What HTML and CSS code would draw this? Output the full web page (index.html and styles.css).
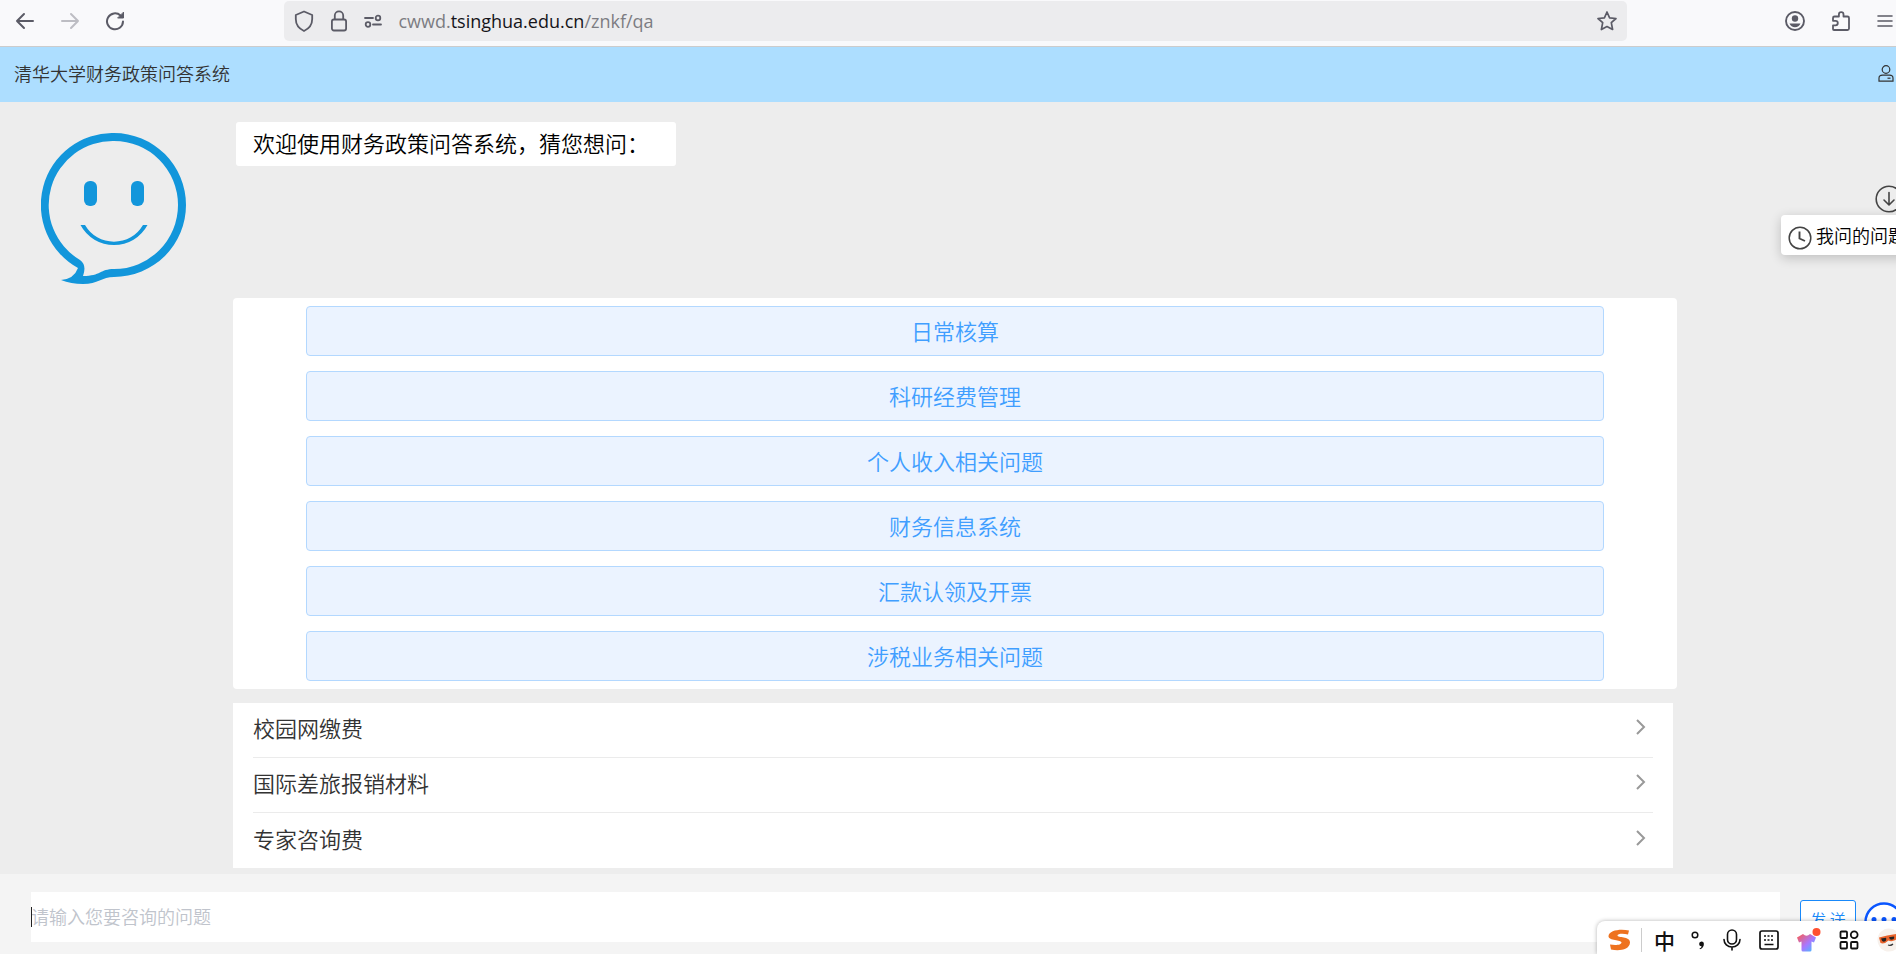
FILE: index.html
```html
<!DOCTYPE html>
<html lang="zh-CN">
<head>
<meta charset="utf-8">
<title>清华大学财务政策问答系统</title>
<link rel="stylesheet" href="styles.css">
</head>
<body>
<div class="browser">
  <div class="nav">
    <button class="icon-btn" aria-label="后退"><svg width="20" height="20" viewBox="0 0 20 20" fill="none" stroke="#5b5b66" stroke-width="2" stroke-linecap="round" stroke-linejoin="round"><path d="M18 10H2M9 3L2 10l7 7"/></svg></button>
    <button class="icon-btn" aria-label="前进"><svg width="20" height="20" viewBox="0 0 20 20" fill="none" stroke="#bdbdc3" stroke-width="2" stroke-linecap="round" stroke-linejoin="round"><path d="M2 10h16M11 3l7 7-7 7"/></svg></button>
    <button class="icon-btn" aria-label="刷新"><svg width="20" height="20" viewBox="0 0 20 20" fill="none" stroke="#5b5b66" stroke-width="2" stroke-linecap="round"><path d="M18 10.500A8 8 0 1 1 15.500 4.500"/><path d="M18.500 1.500V7h-5.500z" fill="#5b5b66" stroke-width="1" stroke-linejoin="round"/></svg></button>
  </div>
  <div class="address">
    <svg width="20" height="22" viewBox="0 0 20 22" fill="none" stroke="#5b5b66" stroke-width="1.800" stroke-linejoin="round"><path d="M10 1.500L1.800 5v4c0 5 3 9.500 8.200 12 5.200-2.500 8.200-7 8.200-12V5z"/></svg>
    <svg width="18" height="22" viewBox="0 0 18 22" fill="none" stroke="#5b5b66" stroke-width="1.800"><rect x="1.900" y="9.500" width="14.200" height="11" rx="2"/><path d="M4.800 9.500V5.500a4.200 4.200 0 0 1 8.400 0v4"/></svg>
    <svg width="18" height="14" viewBox="0 0 18 14" fill="none" stroke="#5b5b66" stroke-width="1.800" stroke-linecap="round"><path d="M1 4h8M9 10.500h8"/><circle cx="14" cy="4" r="2.300"/><circle cx="4" cy="10.500" r="2.300"/></svg>
    <span class="url">cwwd.<b>tsinghua.edu.cn</b>/znkf/qa</span>
    <button class="icon-btn" aria-label="收藏"><svg width="20" height="20" viewBox="0 0 20 20" fill="none" stroke="#5b5b66" stroke-width="1.700" stroke-linejoin="round"><path d="M10 1l2.600 5.800 6.400.700-4.700 4.200 1.300 6.800L10 15.500l-5.600 3 1.300-6.800L1 7.500l6.400-.7z"/></svg></button>
  </div>
  <div class="tools">
    <button class="icon-btn" aria-label="账户"><svg width="20" height="20" viewBox="0 0 20 20"><circle cx="10" cy="10" r="9" fill="none" stroke="#5b5b66" stroke-width="1.900"/><circle cx="10" cy="7.500" r="3.200" fill="#5b5b66"/><path d="M4.500 12.500h11c-.8 2.300-3 3.800-5.500 3.800s-4.700-1.500-5.500-3.800z" fill="#5b5b66"/></svg></button>
    <button class="icon-btn" aria-label="扩展"><svg width="18" height="20" viewBox="0 0 18 20" fill="none" stroke="#5b5b66" stroke-width="1.800" stroke-linejoin="round"><path d="M2 19h13.500a1.500 1.500 0 0 0 1.500-1.500V7a1.500 1.500 0 0 0-1.500-1.500H11.500V3.500a2.300 2.300 0 0 0-4.600 0v2H2.500A1.500 1.500 0 0 0 1 7v2.800h2.500a2.300 2.300 0 0 1 0 4.600H1V18a1 1 0 0 0 1 1z"/></svg></button>
    <button class="icon-btn" aria-label="菜单"><svg width="16" height="12" viewBox="0 0 16 12" stroke="#5b5b66" stroke-width="1.600" stroke-linecap="round"><path d="M1 1h14M1 6h14M1 11h14"/></svg></button>
  </div>
</div>

<header class="header">
  <h1 class="title">清华大学财务政策问答系统</h1>
  <button class="icon-btn" aria-label="用户"><svg width="16" height="17" viewBox="0 0 16 17" fill="none" stroke="#333" stroke-width="1.200"><circle cx="8" cy="4.500" r="3.800"/><path d="M1 16.200v-3c0-2 1.500-3 3.500-3h7c2 0 3.500 1 3.500 3v3z"/><path d="M9.500 13.200h3"/></svg></button>
</header>

<main class="main">
  <section class="intro">
    <svg class="face" viewBox="0 0 146 152" fill="#1296db"><path fill-rule="evenodd" d="M73 0A72 72 0 0 1 73 144C61 144 57 151 42 151Q30 151 20 147Q33 146 37 135A72 72 0 0 1 73 0ZM73 8A64 64 0 0 0 39 127Q46 132 42 143C60 143 59 136 73 136A64 64 0 0 0 73 8Z"/><rect x="43" y="48" width="13" height="25" rx="6"/><rect x="90" y="48" width="13" height="25" rx="6"/><path d="M39.500 92A38 38 0 0 0 106.500 92H102A33.500 33.500 0 0 1 44 92Z"/></svg>
    <p class="welcome">欢迎使用财务政策问答系统，猜您想问：</p>
  </section>

  <section class="topics">
    <button class="topic">日常核算</button>
    <button class="topic">科研经费管理</button>
    <button class="topic">个人收入相关问题</button>
    <button class="topic">财务信息系统</button>
    <button class="topic">汇款认领及开票</button>
    <button class="topic">涉税业务相关问题</button>
  </section>

  <nav class="list">
    <a class="row" href="#">校园网缴费<svg class="chev" viewBox="0 0 10 16"><path d="M1 1l7 7-7 7"/></svg></a>
    <a class="row" href="#">国际差旅报销材料<svg class="chev" viewBox="0 0 10 16"><path d="M1 1l7 7-7 7"/></svg></a>
    <a class="row" href="#">专家咨询费<svg class="chev" viewBox="0 0 10 16"><path d="M1 1l7 7-7 7"/></svg></a>
  </nav>
</main>

<form class="ask">
  <input class="question" type="text" aria-label="咨询问题" placeholder="请输入您要咨询的问题">
  <span class="caret"></span>
  <button class="send" type="button">发 送</button>
  <svg class="chat" width="40" height="40" viewBox="0 0 40 40"><circle cx="20" cy="20" r="18.500" fill="#fff" stroke="#0a56ff" stroke-width="2.500"/><g fill="#0a56ff"><circle cx="10" cy="17.500" r="2.500"/><circle cx="20" cy="17.500" r="2.500"/><circle cx="30" cy="17.500" r="2.500"/></g></svg>
</form>

<aside class="side">
  <button class="icon-btn down" aria-label="收起"><svg width="28" height="28" viewBox="0 0 28 28" fill="none" stroke="#444" stroke-width="1.600" stroke-linecap="round" stroke-linejoin="round"><circle cx="14" cy="14" r="12.800"/><path d="M14 7.500v12M9 15l5 5 5-5"/></svg></button>
  <button class="mine"><svg class="clock" width="24" height="24" viewBox="0 0 24 24" fill="none" stroke="#444" stroke-width="1.500"><circle cx="12" cy="12" r="10.800"/><path d="M11.500 5.500V12.500l5.500 2.500" stroke-width="1.900"/></svg>我问的问题</button>
</aside>

<div class="ime">
  <svg width="24" height="22" viewBox="0 0 24 22" fill="#ee721f"><path d="M22 1.500C14-.5 2 1 1.500 7c-.3 5 13 3.500 13 6.500 0 2.500-6 3-11.500 2L4 20.500c8 1.800 18.500.500 19-7 .3-6.500-12.500-4.500-12.500-7 0-2 6-2 10.500-1z"/></svg>
  <i class="sep"></i>
  <span class="zh">中</span>
  <svg width="14" height="20" viewBox="0 0 14 20"><circle cx="4" cy="5" r="2.800" fill="none" stroke="#111" stroke-width="1.500"/><path d="M8.500 18.500c1.500-.5 2-1.300 2-2.200a2.400 2.400 0 1 1 2.400-2.500c0 2.800-1.500 4.800-3.900 5.500z" fill="#111"/></svg>
  <svg width="18" height="22" viewBox="0 0 18 22" fill="none" stroke="#111" stroke-width="1.600" stroke-linecap="round"><rect x="4.500" y="1" width="9" height="14" rx="4.500"/><path d="M1 10.500a8 7.500 0 0 0 16 0M9 18v3"/></svg>
  <svg width="20" height="20" viewBox="0 0 20 20" fill="none" stroke="#111" stroke-width="1.700"><rect x="1" y="1" width="18" height="18" rx="2"/><path d="M5 6h2m1.500 0h2m1.500 0h2M5 10h2m1.500 0h2m1.500 0h2M5.500 14.500h9"/></svg>
  <svg width="24" height="24" viewBox="0 0 24 24"><defs><linearGradient id="g" x1="0" y1="0" x2="1" y2="1"><stop stop-color="#ff5a4a"/><stop offset=".55" stop-color="#a878ff"/><stop offset="1" stop-color="#36c8ff"/></linearGradient></defs><path fill="url(#g)" d="M0 9.500L6 6q3.500 3.500 7 0L19 9.500l-2 5-2.500-1V22q0 1.500-1.500 1.500H6Q4.500 23.500 4.500 22V13.500l-2.500 1z"/><circle cx="19.500" cy="4" r="4" fill="#ff5030"/></svg>
  <svg width="20" height="20" viewBox="0 0 20 20" fill="none" stroke="#111" stroke-width="1.800"><rect x="1.500" y="1.500" width="6.500" height="6.500" rx="1"/><circle cx="15.200" cy="4.800" r="3.400"/><rect x="1.500" y="12" width="6.500" height="6.500" rx="1"/><rect x="12" y="12" width="6.500" height="6.500" rx="1"/></svg>
  <svg width="25" height="24" viewBox="0 0 25 24"><circle cx="12" cy="12" r="11.500" fill="#f7f1ec"/><path d="M2 9.500q8-2.500 17-3.500 1.500 3-.5 6-4 2-7 .5-4 4-8 2.500z" fill="#e8622a"/><path d="M4 10.500l5-.8q1 3-1.500 3.800T4 10.500zM12 9.200l5-.8q.8 2.600-1.700 3.200T12 9.200z" fill="#222"/><path d="M11 17q3 1 5-1" fill="none" stroke="#333" stroke-width="1.200"/><path d="M23.500 5l1.500 3v6l-1.500 1-1-3.500-2.500-1 2.500-1.500z" fill="#ffd02e"/></svg>
</div>
</body>
</html>
```
FILE: styles.css
```css
* { box-sizing: border-box; }
body {
  margin: 0;
  height: 100vh;
  display: flex;
  flex-direction: column;
  position: relative;
  overflow: hidden;
  background: #ededed;
  color: #333;
  font: 350 18px/24px "Noto Sans CJK SC", sans-serif;
}
svg { display: block; flex: none; }
button { font: inherit; color: inherit; cursor: pointer; }
.icon-btn { display: flex; padding: 0; border: 0; background: none; }

.browser {
  display: flex;
  align-items: flex-start;
  height: 47px;
  flex: none;
  padding-top: 1px;
  background: #f9f9fb;
  border-bottom: 1px solid #ccc;
}
.nav { display: flex; align-items: center; gap: 25px; height: 40px; width: 15%; padding-left: 15px; }
.address {
  display: flex;
  align-items: center;
  gap: 16px;
  height: 40px;
  flex: 0 1 1343px;
  padding: 0 10px;
  border-radius: 5px;
  background: #ececee;
}
.url { flex: 1; color: #7c7c82; font: 400 18px/24px "Open Sans", sans-serif; }
.url b { font-weight: 400; color: #15141a; }
.tools { display: flex; align-items: center; justify-content: flex-end; gap: 27px; height: 40px; flex: 1; padding-right: 3px; }

.header {
  display: flex;
  align-items: center;
  justify-content: space-between;
  height: 55px;
  flex: none;
  padding: 0 2px 3px 14px;
  background: #addeff;
}
.title { margin: 0; font-size: 18px; font-weight: 350; }

.main { flex: 1; min-height: 0; padding-top: 20px; }
.intro { display: flex; align-items: flex-start; height: 176px; }
.face { width: 146px; margin: 11px 49px 0 41px; }
.welcome {
  margin: 0;
  padding: 6px 27px 10px 17px;
  border-radius: 3px;
  background: #fff;
  color: #000;
  font-size: 22px;
  line-height: 28px;
}
.topics {
  display: grid;
  gap: 15px;
  margin: 0 219px 14px 233px;
  padding: 8px 73px;
  border-radius: 4px;
  background: #fff;
}
.topic {
  height: 50px;
  padding: 0 0 3px;
  border: 1px solid #b3d8ff;
  border-radius: 4px;
  background: #ebf3ff;
  color: #409eff;
  font-size: 22px;
}
.list { margin: 0 223px 0 233px; padding: 0 20px; background: #fff; }
.row {
  display: flex;
  align-items: center;
  justify-content: space-between;
  height: 55px;
  padding: 0 7px 6px 0;
  border-bottom: 1px solid #ebebeb;
  color: #333;
  font-size: 22px;
  text-decoration: none;
}
.row:last-child { border-bottom: 0; }
.chev { width: 10px; height: 16px; fill: none; stroke: #999; stroke-width: 2; }

.ask {
  position: relative;
  display: flex;
  align-items: flex-start;
  height: 80px;
  flex: none;
  padding: 18px 0 0 31px;
  background: #f4f4f4;
}
.question {
  flex: 1;
  height: 50px;
  padding: 0 0 3px;
  border: 0;
  outline: 0;
  background: #fff;
  font: inherit;
}
.question::placeholder { color: #c0c4cc; opacity: 1; }
.caret { position: absolute; left: 31px; top: 33px; width: 1px; height: 20px; background: #222; }
.send {
  width: 56px;
  height: 40px;
  margin: 8px 8px 0 20px;
  padding: 0 0 3px;
  border: 1px solid #1989fa;
  border-radius: 3px;
  background: #fff;
  color: #1989fa;
  font-size: 16px;
}
.chat { margin: 10px -8px 0 0; }

.side { position: absolute; right: 0; top: 185px; width: 115px; }
.down { position: absolute; left: 94px; top: 0; }
.mine {
  position: absolute;
  left: 0;
  top: 30px;
  display: flex;
  align-items: center;
  gap: 4px;
  height: 40px;
  padding: 0 7px;
  border: 0;
  border-radius: 4px;
  background: #fff;
  box-shadow: 0 3px 12px rgba(0, 0, 0, .2);
  color: #000;
  white-space: nowrap;
}
.clock { margin-top: 6px; }
.ime {
  position: absolute;
  right: 0;
  bottom: 0;
  display: flex;
  align-items: center;
  gap: 18px;
  width: 299px;
  height: 33px;
  padding: 4px 0 0 10px;
  border-radius: 8px 0 0 0;
  background: #fff;
  box-shadow: 0 0 4px rgba(0, 0, 0, .3);
}
.sep { flex: none; width: 1px; height: 24px; margin: 0 -6px 0 -8px; background: #ccc; }
.zh { margin-right: -2px; color: #111; font-size: 21px; font-weight: 500; }
```
